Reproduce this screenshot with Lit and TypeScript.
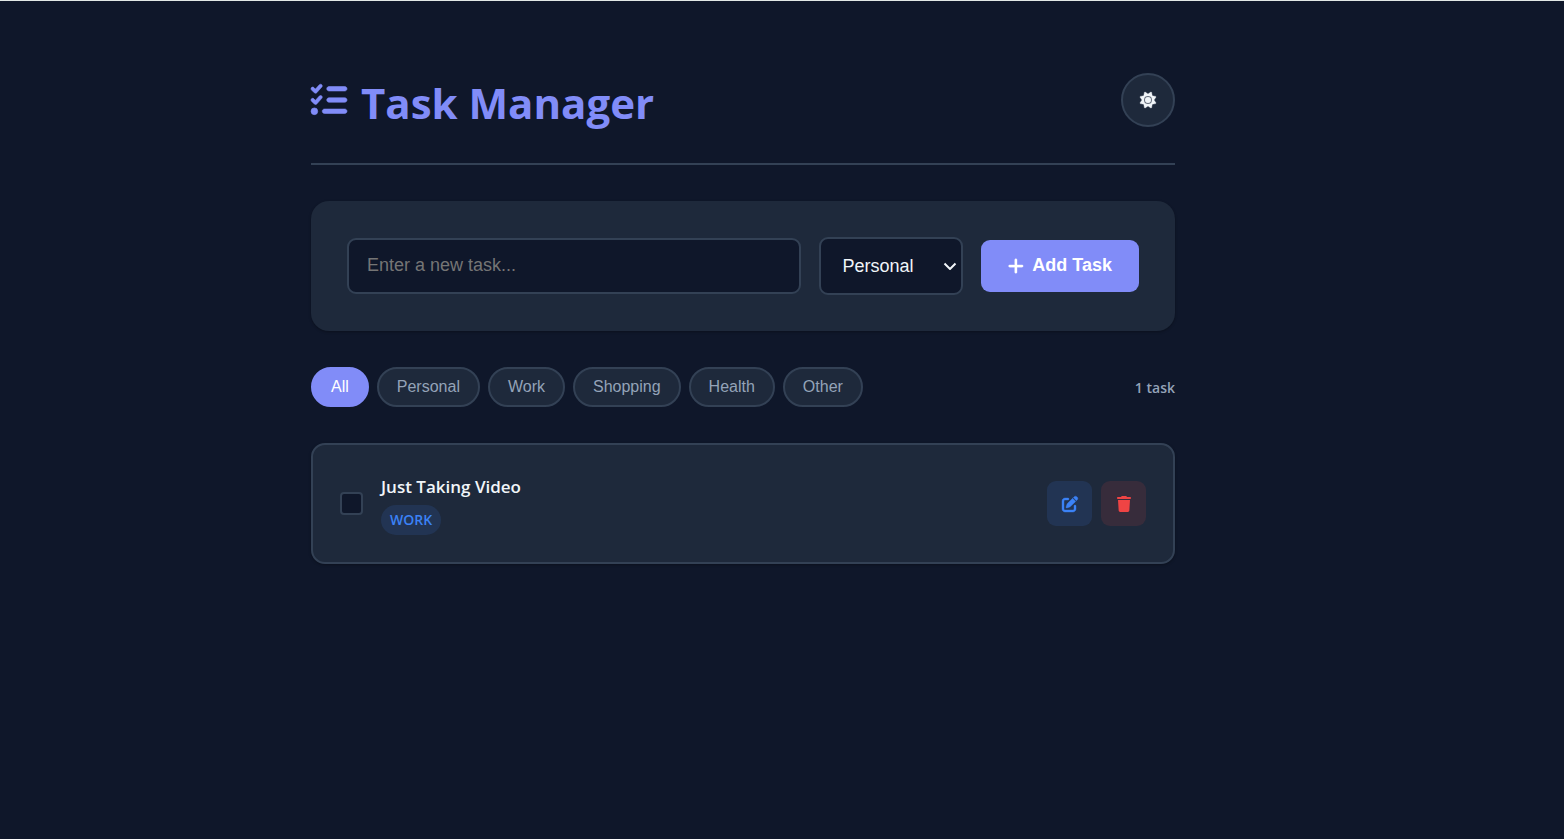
import { LitElement, html, css, svg } from "lit";
import { customElement, state } from "lit/decorators.js";
import { classMap } from "lit/directives/class-map.js";

interface Task {
  id: number;
  text: string;
  category: string;
  done: boolean;
}

const CATEGORIES = ["Personal", "Work", "Shopping", "Health", "Other"];

const ICONS = {
  list: {
    width: 512,
    stroke: 8,
    path: "M152.1 38.2c9.9 8.9 10.7 24 1.8 33.9l-72 80c-4.4 4.9-10.6 7.8-17.2 7.9s-12.9-2.4-17.6-7L7 113C-2.3 103.6-2.3 88.4 7 79s24.6-9.4 33.9 0l22.1 22.1 55.1-61.2c8.9-9.9 24-10.7 33.9-1.8zm0 160c9.9 8.9 10.7 24 1.8 33.9l-72 80c-4.4 4.9-10.6 7.8-17.2 7.9s-12.9-2.4-17.6-7L7 273c-9.4-9.4-9.4-24.6 0-33.9s24.6-9.4 33.9 0l22.1 22.1 55.1-61.2c8.9-9.9 24-10.7 33.9-1.8zM224 96c0-17.7 14.3-32 32-32l224 0c17.7 0 32 14.3 32 32s-14.3 32-32 32l-224 0c-17.7 0-32-14.3-32-32zm0 160c0-17.7 14.3-32 32-32l224 0c17.7 0 32 14.3 32 32s-14.3 32-32 32l-224 0c-17.7 0-32-14.3-32-32zM160 416c0-17.7 14.3-32 32-32l288 0c17.7 0 32 14.3 32 32s-14.3 32-32 32l-288 0c-17.7 0-32-14.3-32-32zM48 368a48 48 0 1 1 0 96 48 48 0 1 1 0-96z",
  },
  sun: {
    width: 512,
    stroke: 12,
    path: "M361.5 1.2c5 2.1 8.6 6.6 9.6 11.9L391 121l107.9 19.8c5.3 1 9.8 4.6 11.9 9.6s1.5 10.7-1.6 15.2L446.9 256l62.3 90.3c3.1 4.5 3.7 10.2 1.6 15.2s-6.6 8.6-11.9 9.6L391 391 371.1 498.9c-1 5.3-4.6 9.8-9.6 11.9s-10.7 1.5-15.2-1.6L256 446.9l-90.3 62.3c-4.5 3.1-10.2 3.7-15.2 1.6s-8.6-6.6-9.6-11.9L121 391 13.1 371.1c-5.3-1-9.8-4.6-11.9-9.6s-1.5-10.7 1.6-15.2L65.1 256 2.8 165.7c-3.1-4.5-3.7-10.2-1.6-15.2s6.6-8.6 11.9-9.6L121 121 140.9 13.1c1-5.3 4.6-9.8 9.6-11.9s10.7-1.5 15.2 1.6L256 65.1 346.3 2.8c4.5-3.1 10.2-3.7 15.2-1.6zM160 256a96 96 0 1 1 192 0 96 96 0 1 1 -192 0zm224 0a128 128 0 1 0 -256 0 128 128 0 1 0 256 0z",
  },
  plus: {
    width: 448,
    stroke: 10,
    path: "M256 80c0-17.7-14.3-32-32-32s-32 14.3-32 32l0 144L48 224c-17.7 0-32 14.3-32 32s14.3 32 32 32l144 0 0 144c0 17.7 14.3 32 32 32s32-14.3 32-32l0-144 144 0c17.7 0 32-14.3 32-32s-14.3-32-32-32l-144 0 0-144z",
  },
  edit: {
    width: 512,
    stroke: 12,
    path: "M471.6 21.7c-21.9-21.9-57.3-21.9-79.2 0L362.3 51.7l97.9 97.9 30.1-30.1c21.9-21.9 21.9-57.3 0-79.2L471.6 21.7zm-299.2 220c-6.1 6.1-10.8 13.6-13.5 21.9l-29.6 88.8c-2.9 8.6-.6 18.1 5.8 24.6s15.9 8.7 24.6 5.8l88.8-29.6c8.2-2.7 15.7-7.4 21.9-13.5L437.7 172.3 339.7 74.3 172.4 241.7zM96 64C43 64 0 107 0 160L0 416c0 53 43 96 96 96l256 0c53 0 96-43 96-96l0-96c0-17.7-14.3-32-32-32s-32 14.3-32 32l0 96c0 17.7-14.3 32-32 32L96 448c-17.7 0-32-14.3-32-32l0-256c0-17.7 14.3-32 32-32l96 0c17.7 0 32-14.3 32-32s-14.3-32-32-32L96 64z",
  },
  trash: {
    width: 448,
    stroke: 0,
    path: "M135.2 17.7L128 32 32 32C14.3 32 0 46.3 0 64S14.3 96 32 96l384 0c17.7 0 32-14.3 32-32s-14.3-32-32-32l-96 0-7.2-14.3C307.4 6.8 296.3 0 284.2 0L163.8 0c-12.1 0-23.2 6.8-28.6 17.7zM416 128L32 128 53.2 467c1.6 25.3 22.6 45 47.9 45l245.8 0c25.3 0 46.3-19.7 47.9-45L416 128z",
  },
};

const icon = (name: keyof typeof ICONS) => html`
  <svg class="icon" viewBox="0 0 ${ICONS[name].width} 512" aria-hidden="true">
    ${svg`<path d=${ICONS[name].path} stroke-width=${ICONS[name].stroke}></path>`}
  </svg>
`;

@customElement("app-root")
export class AppRoot extends LitElement {
  @state() private tasks: Task[] = [
    { id: 1, text: "Just Taking Video", category: "Work", done: false },
  ];
  @state() private filter = "All";

  static styles = css`
    :host {
      --bg: #0f172a;
      --surface: #1e293b;
      --border: #334155;
      --accent: #818cf8;
      --text: #f1f5f9;
      --muted: #94a3b8;
      --control-font: "Liberation Sans", Arial, sans-serif;
      display: block;
      box-sizing: border-box;
      min-height: 100vh;
      padding: 63px 96px 36px 18px;
      border-top: 1px solid #e2e8e6;
      background: var(--bg);
      color: var(--text);
      font: 18px/29px "Segoe UI", "Open Sans", sans-serif;
    }
    * {
      box-sizing: border-box;
      margin: 0;
    }
    .page {
      max-width: 864px;
      margin: 0 auto;
      display: flex;
      flex-direction: column;
      gap: 36px;
    }
    .icon {
      height: 1em;
      fill: currentColor;
      stroke: currentColor;
      overflow: visible;
      flex: none;
    }
    button,
    input,
    select {
      font-family: var(--control-font);
    }
    button {
      display: flex;
      align-items: center;
      justify-content: center;
      cursor: pointer;
    }
    .header {
      display: flex;
      align-items: center;
      justify-content: space-between;
      padding-bottom: 27px;
      border-bottom: 2px solid var(--border);
    }
    .title {
      display: flex;
      align-items: center;
      gap: 14px;
      color: var(--accent);
      font-size: 42px;
      line-height: 66px;
      font-weight: 700;
    }
    .title span {
      padding-top: 6px;
    }
    .title .icon {
      height: 36px;
    }
    .theme {
      width: 54px;
      height: 54px;
      padding: 0;
      border: 2px solid var(--border);
      border-radius: 50%;
      background: var(--surface);
      color: var(--text);
      font-size: 16px;
    }
    .form {
      display: flex;
      align-items: center;
      gap: 18px;
      padding: 36px;
      border-radius: 18px;
      background: var(--surface);
      box-shadow: 0 1px 3px rgba(0, 0, 0, 0.3);
    }
    .entry,
    .select {
      border: 2px solid var(--border);
      border-radius: 9px;
      background: var(--bg);
      color: var(--text);
      font-size: 18px;
    }
    .entry {
      flex: 1;
      min-width: 0;
      height: 56px;
      padding: 0 18px 2px;
    }
    .entry::placeholder {
      color: #757575;
    }
    .picker {
      display: grid;
      align-items: center;
    }
    .select {
      grid-area: 1 / 1;
      appearance: none;
      width: 144px;
      height: 58px;
      padding: 0 22px;
    }
    .chevron {
      grid-area: 1 / 1;
      justify-self: end;
      width: 14px;
      margin-right: 6px;
      fill: none;
      stroke: var(--text);
      stroke-width: 2;
      pointer-events: none;
    }
    .add {
      gap: 9px;
      height: 52px;
      padding: 0 27px;
      border: 0;
      border-radius: 9px;
      background: var(--accent);
      color: #fff;
      font-size: 18px;
      font-weight: 700;
    }
    .add span {
      padding-bottom: 2px;
    }
    .toolbar {
      display: flex;
      align-items: center;
      justify-content: space-between;
    }
    .filters {
      display: flex;
      flex-wrap: wrap;
      gap: 8px;
    }
    .filter {
      height: 40px;
      padding: 0 18px;
      border: 2px solid var(--border);
      border-radius: 20px;
      background: var(--surface);
      color: var(--muted);
      font-size: 16px;
    }
    .filter.active {
      border-color: var(--accent);
      background: var(--accent);
      color: #fff;
    }
    .count {
      color: var(--muted);
      font-size: 14px;
      font-weight: 600;
    }
    .list {
      display: flex;
      flex-direction: column;
      gap: 14px;
      padding: 0;
      list-style: none;
    }
    .task {
      display: flex;
      align-items: center;
      gap: 18px;
      padding: 27px;
      border: 2px solid var(--border);
      border-radius: 14px;
      background: var(--surface);
      box-shadow: 0 1px 3px rgba(0, 0, 0, 0.3);
    }
    .check {
      appearance: none;
      flex: none;
      width: 23px;
      height: 23px;
      border: 2px solid var(--border);
      border-radius: 4px;
      background: var(--bg);
    }
    .check:checked {
      background: var(--accent);
    }
    .body {
      flex: 1;
      display: flex;
      flex-direction: column;
      align-items: flex-start;
      gap: 4px;
    }
    .name {
      font-size: 17px;
      font-weight: 600;
    }
    .done {
      text-decoration: line-through;
    }
    .badge {
      padding: 0 9px;
      border-radius: 15px;
      background: rgba(59, 130, 246, 0.13);
      color: #3b82f6;
      font-size: 14px;
      line-height: 30px;
      font-weight: 600;
      text-transform: uppercase;
    }
    .actions {
      display: flex;
      gap: 9px;
    }
    .action {
      width: 45px;
      height: 45px;
      padding: 0;
      border: 0;
      border-radius: 9px;
      font-size: 16px;
    }
    .edit {
      background: rgba(59, 130, 246, 0.13);
      color: #3b82f6;
    }
    .delete {
      background: rgba(239, 68, 68, 0.12);
      color: #ef4444;
    }
  `;

  private add(event: Event) {
    event.preventDefault();
    const form = event.target as HTMLFormElement;
    const data = new FormData(form);
    const text = String(data.get("task")).trim();
    if (!text) return;
    this.tasks = [
      ...this.tasks,
      { id: Date.now(), text, category: String(data.get("category")), done: false },
    ];
    form.reset();
  }

  private toggle(id: number) {
    this.tasks = this.tasks.map((t) => (t.id === id ? { ...t, done: !t.done } : t));
  }

  private renderTask(task: Task) {
    const id = `task-${task.id}`;
    return html`
      <li class="task">
        <input
          class="check"
          type="checkbox"
          id=${id}
          .checked=${task.done}
          @change=${() => this.toggle(task.id)}
        />
        <div class="body">
          <label class=${classMap({ name: true, done: task.done })} for=${id}>${task.text}</label>
          <span class="badge">${task.category}</span>
        </div>
        <div class="actions">
          <button class="action edit" type="button" aria-label="Edit task">${icon("edit")}</button>
          <button
            class="action delete"
            type="button"
            aria-label="Delete task"
            @click=${() => (this.tasks = this.tasks.filter((t) => t.id !== task.id))}
          >
            ${icon("trash")}
          </button>
        </div>
      </li>
    `;
  }

  render() {
    const shown = this.tasks.filter((t) => this.filter === "All" || t.category === this.filter);
    return html`
      <main class="page">
        <header class="header">
          <h1 class="title">${icon("list")}<span>Task Manager</span></h1>
          <button class="theme" type="button" aria-label="Toggle theme">${icon("sun")}</button>
        </header>
        <form class="form" @submit=${this.add}>
          <input class="entry" name="task" type="text" placeholder="Enter a new task..." aria-label="New task" />
          <div class="picker">
            <select class="select" name="category" aria-label="Category">
              ${CATEGORIES.map((c) => html`<option>${c}</option>`)}
            </select>
            <svg class="chevron" viewBox="0 0 14 8" aria-hidden="true"><path d="M1.5 1.5 7 7l5.5-5.5"></path></svg>
          </div>
          <button class="add" type="submit">${icon("plus")}<span>Add Task</span></button>
        </form>
        <div class="toolbar">
          <div class="filters">
            ${["All", ...CATEGORIES].map(
              (c) => html`
                <button
                  class=${classMap({ filter: true, active: this.filter === c })}
                  type="button"
                  @click=${() => (this.filter = c)}
                >
                  ${c}
                </button>
              `
            )}
          </div>
          <span class="count">${shown.length} ${shown.length === 1 ? "task" : "tasks"}</span>
        </div>
        <ul class="list">
          ${shown.map((t) => this.renderTask(t))}
        </ul>
      </main>
    `;
  }
}
